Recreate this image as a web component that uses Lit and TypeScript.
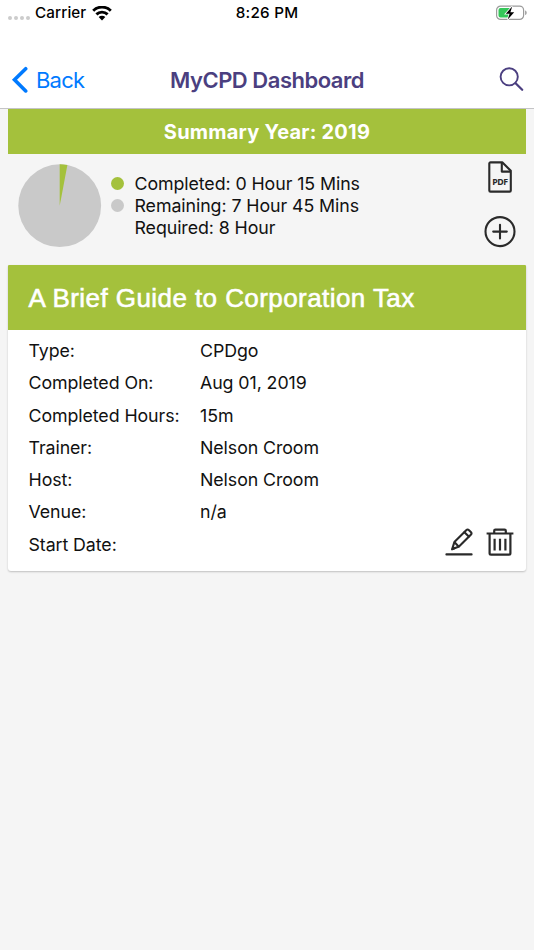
import { LitElement, html, css, svg } from "lit";
import { customElement, property } from "lit/decorators.js";

const icons = {
  wifi: svg`<svg width="20" height="15" viewBox="0 0 20 15" fill="none" stroke="#000" stroke-width="2.9">
    <path d="M1.2 4.7a12.6 12.6 0 0 1 17.6 0"/><path d="M4.4 8.4a8 8 0 0 1 11.2 0"/>
    <path d="M6.7 11.1a4.6 4.6 0 0 1 6.6 0L10 14.5Z" fill="#000" stroke="none"/></svg>`,
  battery: svg`<svg width="32" height="16" viewBox="0 0 32 16">
    <rect x="0.6" y="1.1" width="27" height="13.3" rx="4" fill="#fff" stroke="#9b9b9b" stroke-width="1.2"/>
    <path d="M29.1 5.5c2.1.5 2.1 4.1 0 4.6Z" fill="#9b9b9b"/>
    <path d="M4.5 2.9H14v9.7H4.5a2 2 0 0 1-2-2V4.9a2 2 0 0 1 2-2Z" fill="#34c759"/>
    <path d="M16.2 1.4 9.8 8.8h3.8L11.7 14.6 18.2 7.2h-3.8Z" fill="#000" stroke="#fff" stroke-width="1.6" paint-order="stroke"/></svg>`,
  back: svg`<svg width="17" height="28" viewBox="0 0 17 28" fill="none" stroke="#007aff" stroke-width="3.6" stroke-linecap="round">
    <path d="M14.7 2.7 3.5 13.7 14.7 24.9"/></svg>`,
  search: svg`<svg width="26" height="26" viewBox="0 0 26 26" fill="none" stroke="#4b3f80" stroke-width="1.9" stroke-linecap="round">
    <circle cx="10.2" cy="9.8" r="8.6"/><path d="m16.6 16.2 6.6 6.5" stroke-width="2.3"/></svg>`,
  pdf: svg`<svg width="24" height="32" viewBox="0 0 24 32" fill="none" stroke="#2a2a2a" stroke-width="2.1" stroke-linejoin="round">
    <path d="M2.5 1.4h12L22.8 9.8v19.6a1.2 1.2 0 0 1-1.2 1.2H2.5a1.2 1.2 0 0 1-1.2-1.2V2.6a1.2 1.2 0 0 1 1.2-1.2Z"/>
    <path d="M13.8 1.7v8.9h8.8"/>
    <text x="12.2" y="24" text-anchor="middle" textLength="15.8" fill="#2a2a2a" stroke="none"
      font-family="Noto Sans, sans-serif" font-weight="700" font-size="8.8">PDF</text></svg>`,
  add: svg`<svg width="32" height="32" viewBox="0 0 32 32" fill="none" stroke="#2a2a2a" stroke-width="2.1" stroke-linecap="round">
    <circle cx="16" cy="15.6" r="14.5"/><path d="M16 8.8v13.6M9.2 15.6h13.6"/></svg>`,
  edit: svg`<svg width="28" height="28" viewBox="0 0 28 28" fill="none" stroke="#2a2a2a" stroke-width="2.1" stroke-linejoin="round" stroke-linecap="round">
    <path d="M1.4 26.4h25.2"/>
    <path d="m7.1 21.3 2.3-7.2L21.2 2.2a2 2 0 0 1 2.8 0l1.8 1.8a2 2 0 0 1 0 2.8L14 18.6Z"/>
    <path d="m19.4 4.2 4.4 4.4M9.8 14.6l3.8 3.8"/>
    <path d="m7.1 21.3 1-3.2 2.2 2.1Z" fill="#2a2a2a" stroke-width="1"/></svg>`,
  trash: svg`<svg width="28" height="28" viewBox="0 0 28 28" fill="none" stroke="#2a2a2a" stroke-width="2.2" stroke-linejoin="round">
    <path d="M.6 5.5h26.8M3.6 5.5v19.8a1.4 1.4 0 0 0 1.4 1.4h18a1.4 1.4 0 0 0 1.4-1.4V5.5"/>
    <path d="M8.2 5.2V2.8a1.2 1.2 0 0 1 1.2-1.2h9.2a1.2 1.2 0 0 1 1.2 1.2v2.4"/>
    <path d="M8.6 10.7v11.8M14 10.7v11.8M19.4 10.7v11.8"/></svg>`,
};

@customElement("status-bar")
class StatusBar extends LitElement {
  static styles = css`
    :host { display: grid; grid-template-columns: 1fr auto 1fr; height: 26px; align-items: center;
      font-size: 15.2px; font-weight: 500; color: #000; }
    .left { display: flex; align-items: center; padding-left: 8px; }
    .dots { display: flex; gap: 2px; margin: 9px 5px 0 0; }
    .dot { width: 4px; height: 4px; border-radius: 50%; background: #ccc; }
    .carrier { letter-spacing: 0.12px; margin-right: 6px; }
    .time { letter-spacing: 0.25px; }
    .right { display: flex; justify-content: flex-end; padding-right: 6px; }
    .carrier, .time { line-height: 18px; margin-top: -1px; }
    svg { display: block; }
  `;
  render() {
    return html`
      <div class="left">
        <div class="dots">${[0, 1, 2, 3].map(() => html`<i class="dot"></i>`)}</div>
        <span class="carrier">Carrier</span>${icons.wifi}
      </div>
      <span class="time">8:26 PM</span>
      <div class="right">${icons.battery}</div>`;
  }
}

@customElement("nav-bar")
class NavBar extends LitElement {
  static styles = css`
    :host { display: grid; grid-template-columns: 1fr auto 1fr; align-items: center; height: 57px;
      margin-top: 25px; border-bottom: 1px solid #c4c4c6; box-sizing: border-box; }
    .back { display: flex; align-items: center; gap: 8px; padding-left: 11px; color: #007aff; font-size: 22px;
      letter-spacing: -0.8px; }
    .title { font-size: 22px; font-weight: 600; letter-spacing: -0.48px; color: #4b3f80; }
    .search { display: flex; justify-content: flex-end; padding-right: 9px; }
    svg { display: block; }
  `;
  render() {
    return html`
      <div class="back">${icons.back}<span>Back</span></div>
      <div class="title">MyCPD Dashboard</div>
      <div class="search">${icons.search}</div>`;
  }
}

@customElement("cpd-summary")
class CpdSummary extends LitElement {
  static styles = css`
    :host { display: block; padding: 0 8px; }
    .year { height: 45px; line-height: 46px; background: #a4c13c; color: #fff; text-align: center;
      font-size: 20px; font-weight: 700; letter-spacing: 0.22px; }
    .body { display: flex; height: 111px; box-sizing: border-box; padding: 10px 10px 0; }
    .pie { display: block; }
    .legend { display: grid; grid-template-columns: 13px auto; column-gap: 10.5px; grid-auto-rows: 22.2px;
      align-items: center; align-content: start; margin: 8px 0 0 9px; font-size: 17.8px; letter-spacing: -0.08px;
      color: #111; }
    .dot { width: 13px; height: 13px; border-radius: 50%; }
    .done { background: #a4c13c; }
    .left { background: #c9c9c9; }
    .label { grid-column: 2; white-space: nowrap; }
    .actions { display: flex; flex-direction: column; align-items: center; gap: 23px; margin: -3px 0 0 auto; }
  `;
  render() {
    return html`
      <div class="year">Summary Year: 2019</div>
      <div class="body">
        <svg class="pie" width="84" height="84" viewBox="0 0 84 84">
          <circle cx="41.7" cy="41.7" r="41.4" fill="#c9c9c9"/>
          <path d="M41.7 41.7V.3A41.4 41.4 0 0 1 49.4 1.1Z" fill="#a4c13c"/>
        </svg>
        <div class="legend">
          <i class="dot done"></i><span class="label">Completed: 0 Hour 15 Mins</span>
          <i class="dot left"></i><span class="label">Remaining: 7 Hour 45 Mins</span>
          <span class="label">Required: 8 Hour</span>
        </div>
        <div class="actions">${icons.pdf}${icons.add}</div>
      </div>`;
  }
}

@customElement("cpd-card")
class CpdCard extends LitElement {
  @property() heading = "";
  @property({ attribute: false }) rows: [string, string][] = [];
  static styles = css`
    :host { display: block; position: relative; margin: 0 8px; height: 306px; background: #fff;
      border-radius: 1px 1px 3px 3px; box-shadow: 0 1px 2px rgba(0, 0, 0, 0.22); overflow: hidden; }
    .heading { height: 64.5px; line-height: 66px; padding-left: 20.5px; background: #a4c13c; color: #fff;
      font-family: "Liberation Sans", Arial, sans-serif; font-size: 26px; letter-spacing: 0.43px;
      -webkit-text-stroke: 0.6px #fff; }
    .rows { display: grid; grid-template-columns: 171.5px 1fr; grid-auto-rows: 32.25px; align-items: center;
      padding: 5px 0 0 20.5px; font-size: 17.8px; letter-spacing: -0.08px; color: #111; }
    .actions { position: absolute; right: 12px; bottom: 15px; display: flex; gap: 13px; }
    svg { display: block; }
  `;
  render() {
    return html`
      <div class="heading">${this.heading}</div>
      <div class="rows">${this.rows.map(([k, v]) => html`<span>${k}:</span><span>${v}</span>`)}</div>
      <div class="actions">${icons.edit}${icons.trash}</div>`;
  }
}

@customElement("app-root")
class AppRoot extends LitElement {
  static styles = css`
    :host { display: block; height: 950px; background: #f5f5f5; overflow: hidden;
      font-family: Inter, "Liberation Sans", sans-serif; }
    .top { background: #fff; height: 109px; overflow: hidden; display: flex; flex-direction: column; }
    nav-bar { flex: 1; }
  `;
  private rows: [string, string][] = [
    ["Type", "CPDgo"],
    ["Completed On", "Aug 01, 2019"],
    ["Completed Hours", "15m"],
    ["Trainer", "Nelson Croom"],
    ["Host", "Nelson Croom"],
    ["Venue", "n/a"],
    ["Start Date", ""],
  ];
  render() {
    return html`
      <div class="top"><status-bar></status-bar><nav-bar></nav-bar></div>
      <cpd-summary></cpd-summary>
      <cpd-card heading="A Brief Guide to Corporation Tax" .rows=${this.rows}></cpd-card>`;
  }
}
